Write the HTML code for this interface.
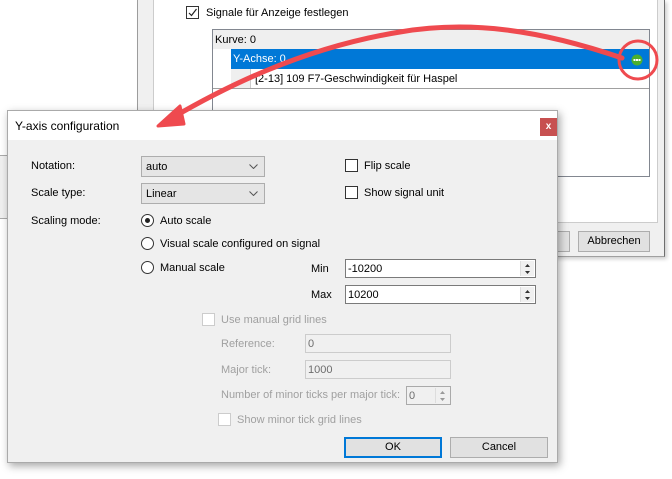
<!DOCTYPE html>
<html><head><meta charset="utf-8"><style>
*{box-sizing:border-box;margin:0;padding:0}
body{width:672px;height:479px;overflow:hidden;background:#fff;position:relative;font-family:"Liberation Sans",sans-serif;font-size:11px;color:#000}
.a{position:absolute}
.t{position:absolute;white-space:nowrap;line-height:14px}
.cb{position:absolute;width:13px;height:13px;border:1px solid #333;background:#fff}
.rb{position:absolute;width:13px;height:13px;border:1px solid #333;border-radius:50%;background:#fff}
.combo{position:absolute;background:#e5e5e5;border:1px solid #adadad;height:21px;width:124px;padding:3px 4px;line-height:14px}
.combo svg{position:absolute;right:6px;top:7px}
.inp{position:absolute;background:#fff;border:1px solid #7a7a7a;height:19px;padding:2px 2px;line-height:14px}
.dis{color:#a0a0a0}
.btn{position:absolute;background:#e1e1e1;border:1px solid #adadad;text-align:center;line-height:18px;height:21px}
.spin{position:absolute;right:1px;top:1px;width:14px;bottom:1px;border-left:1px solid #ddd;background:#f0f0f0}
</style></head><body>
<div class="a" style="left:137px;top:0;width:1px;height:260px;background:#a0a0a0"></div>
<div class="a" style="left:138px;top:0;width:527px;height:257px;background:#f0f0f0;border-right:1px solid #6e6e6e;border-bottom:1px solid #a0a0a0;box-shadow:2px 2px 4px rgba(0,0,0,.2)"></div>
<div class="a" style="left:153px;top:0;width:505px;height:223px;background:#fff;border-left:1px solid #ccc;border-right:1px solid #ccc;border-bottom:1px solid #ccc"></div>
<div class="cb" style="left:186px;top:6px"></div>
<svg class="a" style="left:186px;top:6px" width="13" height="13"><path d="M3,7 L5.5,9.5 L10.5,3" fill="none" stroke="#222" stroke-width="1.2"/></svg>
<div class="t" style="left:206px;top:6px">Signale für Anzeige festlegen</div>
<div class="a" style="left:212px;top:29px;width:438px;height:148px;border:1px solid #828790;background:#fff"></div>
<div class="a" style="left:213px;top:30px;width:436px;height:19px;background:#efefef"></div>
<div class="t" style="left:215px;top:33px">Kurve: 0</div>
<div class="a" style="left:231px;top:49px;width:418px;height:20px;background:#0078d7"></div>
<div class="t" style="left:233px;top:52px;color:#fff">Y-Achse: 0</div>
<svg class="a" style="left:631px;top:54px" width="12" height="12"><circle cx="6" cy="6" r="5.5" fill="#4caf2e"/><rect x="2.5" y="5" width="2" height="2" fill="#fff"/><rect x="5" y="5" width="2" height="2" fill="#fff"/><rect x="7.5" y="5" width="2" height="2" fill="#fff"/></svg>
<div class="a" style="left:231px;top:69px;width:20px;height:20px;background:#efefef;border-right:1px solid #ccc"></div>
<div class="t" style="left:255px;top:72px">[2-13] 109 F7-Geschwindigkeit für Haspel</div>
<div class="a" style="left:213px;top:88px;width:436px;height:1px;background:#a0a0a0"></div>
<div class="btn" style="left:520px;top:231px;width:50px"></div>
<div class="btn" style="left:578px;top:231px;width:72px">Abbrechen</div>
<div class="a" style="left:0;top:155px;width:7px;height:64px;background:#f0f0f0;border-top:1px solid #aaa;border-bottom:1px solid #aaa"></div>
<div class="a" style="left:7px;top:110px;width:551px;height:353px;background:#f0f0f0;border:1px solid #aaa;box-shadow:2px 3px 8px rgba(0,0,0,.35)"></div>
<div class="a" style="left:8px;top:111px;width:549px;height:29px;background:#fff"></div>
<div class="t" style="left:15px;top:119px;font-size:12px">Y-axis configuration</div>
<div class="a" style="left:540px;top:118px;width:17px;height:18px;background:#c75050;color:#fff;font-size:10px;font-weight:bold;text-align:center;line-height:17px">x</div>

<div class="t" style="left:31px;top:159px">Notation:</div>
<div class="t" style="left:31px;top:186px">Scale type:</div>
<div class="t" style="left:31px;top:214px">Scaling mode:</div>
<div class="combo" style="left:141px;top:156px">auto<svg width="9" height="5"><path d="M0.5,0.5 L4.5,4.5 L8.5,0.5" fill="none" stroke="#555"/></svg></div>
<div class="combo" style="left:141px;top:183px">Linear<svg width="9" height="5"><path d="M0.5,0.5 L4.5,4.5 L8.5,0.5" fill="none" stroke="#555"/></svg></div>
<div class="rb" style="left:141px;top:214px"></div><div class="a" style="left:145px;top:218px;width:5px;height:5px;border-radius:50%;background:#222"></div>
<div class="t" style="left:160px;top:214px">Auto scale</div>
<div class="rb" style="left:141px;top:237px"></div>
<div class="t" style="left:160px;top:237px">Visual scale configured on signal</div>
<div class="rb" style="left:141px;top:261px"></div>
<div class="t" style="left:160px;top:261px">Manual scale</div>
<div class="cb" style="left:345px;top:159px"></div>
<div class="t" style="left:364px;top:159px">Flip scale</div>
<div class="cb" style="left:345px;top:186px"></div>
<div class="t" style="left:364px;top:186px">Show signal unit</div>
<div class="t" style="left:311px;top:262px">Min</div>
<div class="t" style="left:311px;top:288px">Max</div>
<div class="inp" style="left:345px;top:259px;width:191px">-10200<div class="spin"><svg width="13" height="16"><path d="M4,6 L6.5,3 L9,6Z M4,10 L6.5,13 L9,10Z" fill="#333"/></svg></div></div>
<div class="inp" style="left:345px;top:285px;width:191px">10200<div class="spin"><svg width="13" height="16"><path d="M4,6 L6.5,3 L9,6Z M4,10 L6.5,13 L9,10Z" fill="#333"/></svg></div></div>
<div class="cb" style="left:202px;top:313px;border-color:#ccc"></div>
<div class="t dis" style="left:221px;top:313px">Use manual grid lines</div>
<div class="t dis" style="left:221px;top:337px">Reference:</div>
<div class="t dis" style="left:221px;top:363px">Major tick:</div>
<div class="t dis" style="left:221px;top:388px">Number of minor ticks per major tick:</div>
<div class="inp" style="left:305px;top:334px;width:146px;background:#f0f0f0;border-color:#ccc;color:#6d6d6d">0</div>
<div class="inp" style="left:305px;top:360px;width:146px;background:#f0f0f0;border-color:#ccc;color:#6d6d6d">1000</div>
<div class="inp" style="left:406px;top:386px;width:45px;background:#f0f0f0;border-color:#aaa;color:#6d6d6d">0<div class="spin"><svg width="13" height="16"><path d="M4,6 L6.5,3 L9,6Z M4,10 L6.5,13 L9,10Z" fill="#999"/></svg></div></div>
<div class="cb" style="left:218px;top:413px;border-color:#ccc"></div>
<div class="t dis" style="left:237px;top:413px">Show minor tick grid lines</div>
<div class="btn" style="left:344px;top:437px;width:98px;border:2px solid #0078d7;line-height:16px">OK</div>
<div class="btn" style="left:450px;top:437px;width:98px">Cancel</div>
<svg class="a" style="left:0;top:0" width="672" height="479">
<path d="M622,58 C540,30 470,20 400,32 C300,48 220,90 172,118" fill="none" stroke="#ef4a4f" stroke-width="5" stroke-linecap="round"/>
<path d="M158,126 L180,106 L184,124 Z" fill="#ef4a4f" stroke="#ef4a4f" stroke-width="3" stroke-linejoin="round"/>
<circle cx="638" cy="60" r="19" fill="none" stroke="#ef4a4f" stroke-width="3"/>
</svg>
</body></html>
